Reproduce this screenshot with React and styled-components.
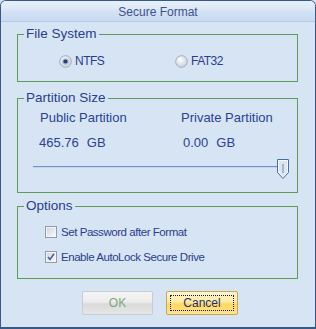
import styled, { createGlobalStyle } from "styled-components";

const Global = createGlobalStyle`
  html, body { margin: 0; padding: 0; background: #d6e4f3; }
  body { font-family: "Liberation Sans", Arial, sans-serif; }
`;

const Window = styled.div`
  box-sizing: border-box;
  width: 316px;
  height: 329px;
  background: #d6e4f3;
  border: 1px solid #35598b;
  border-bottom-width: 2px;
  border-radius: 6px 6px 0 0;
  overflow: hidden;
  display: flex;
  flex-direction: column;
`;

const TitleBar = styled.div`
  height: 19px;
  display: flex;
  align-items: center;
  justify-content: center;
  background: linear-gradient(#e6eff9 0%, #dfe9f7 35%, #d2e1f4 55%, #c9dbf1 100%);
  border-bottom: 1px solid #b2cbea;
  color: #3f5189;
  font-size: 12px;
  padding-top: 1px;
`;

const Group = styled.fieldset`
  margin: ${({ $top }) => $top}px 17px 0 16px;
  padding: 0;
  border: 1px solid #5e9c5c;
  min-width: 0;
`;

const Legend = styled.legend`
  margin-left: 6px;
  padding: 0 2px;
  font-size: 13.5px;
  line-height: 16px;
  color: #2a3c8e;
`;

const GroupBody = styled.div`
  height: ${({ $h }) => $h}px;
  box-sizing: border-box;
  padding: ${({ $pad }) => $pad};
`;

const RadioRow = styled.div`
  display: grid;
  grid-template-columns: 116px auto;
  height: 14px;
  align-items: center;
`;

const Option = styled.label`
  display: flex;
  align-items: center;
  gap: 3px;
  font-size: 12px;
  letter-spacing: -0.5px;
  color: #2a3c8e;
`;

const SizeGrid = styled.div`
  display: grid;
  grid-template-columns: 141px auto;
  row-gap: 9px;
  padding-left: 22px;
  font-size: 13px;
  line-height: 16px;
  color: #2c4196;
`;

const Value = styled.div`
  display: flex;
  gap: 8px;
  margin-left: ${({ $shift }) => $shift}px;
`;

const SliderRow = styled.div`
  display: flex;
  align-items: flex-start;
  margin: 8px 0 0 15px;
  width: 256px;
`;

const Track = styled.div`
  flex: 1;
  height: 1px;
  margin-top: 7px;
  background: #6f92cb;
  border-bottom: 1px solid #c3d5ee;
`;

const CheckList = styled.div`
  display: flex;
  flex-direction: column;
  gap: 9px;
  padding-left: 27px;
`;

const CheckItem = styled.label`
  display: flex;
  align-items: center;
  gap: 4px;
  height: 16px;
  font-size: 11.5px;
  letter-spacing: -0.45px;
  color: #2a3c8e;
`;

const Buttons = styled.div`
  display: flex;
  justify-content: center;
  gap: 13px;
  margin-top: 12px;
  padding-left: 4px;
`;

const Button = styled.button`
  width: ${({ $w }) => $w}px;
  height: 24px;
  box-sizing: border-box;
  border-radius: 2px;
  font-family: "Liberation Sans", Arial, sans-serif;
  font-size: 12px;
  padding: 0;
  position: relative;
  border: 1px solid ${({ $primary }) => ($primary ? "#c4a85a" : "#c9ccd0")};
  color: ${({ $primary }) => ($primary ? "#1e2f7a" : "#78a878")};
  background: ${({ $primary }) =>
    $primary
      ? "linear-gradient(#fff6cf 0%, #ffeaa0 45%, #ffd860 55%, #ffe48a 100%)"
      : "linear-gradient(#f5f5f5 0%, #ececec 45%, #dadada 55%, #e6e6e6 100%)"};
`;

const Focus = styled.span`
  position: absolute;
  inset: 3px;
  border: 1px dotted #1a1a40;
`;

const Radio = ({ checked }) => (
  <svg width="13" height="13" viewBox="0 0 13 13">
    <defs>
      <radialGradient id={checked ? "rg1" : "rg0"} cx="40%" cy="35%" r="70%">
        <stop offset="0" stopColor="#ffffff" />
        <stop offset="1" stopColor="#c7ced8" />
      </radialGradient>
    </defs>
    <circle cx="6.5" cy="6.5" r="5.8" fill={`url(#${checked ? "rg1" : "rg0"})`} stroke="#a3abb8" strokeWidth="1" />
    {checked && (
      <>
        <circle cx="6.5" cy="6.5" r="3.3" fill="#aebcd6" />
        <circle cx="6.5" cy="6.5" r="2.1" fill="#28406f" />
      </>
    )}
  </svg>
);

const Check = ({ checked }) => (
  <svg width="12" height="12" viewBox="0 0 12 12">
    <defs>
      <linearGradient id="cb" x1="0" y1="0" x2="1" y2="1">
        <stop offset="0" stopColor="#d3d6dc" />
        <stop offset="1" stopColor="#f7f7f8" />
      </linearGradient>
    </defs>
    <rect x="0.5" y="0.5" width="11" height="11" fill="#f4f5f7" stroke="#8e9bb2" />
    <rect x="2" y="2" width="8" height="8" fill="url(#cb)" />
    {checked && (
      <path d="M3 6 L5 8.5 L9 2.8" fill="none" stroke="#4d6294" strokeWidth="1.6" />
    )}
  </svg>
);

const Thumb = () => (
  <svg width="12" height="20" viewBox="0 0 12 20">
    <path d="M0.5 0.5 H11.5 V13.5 L6 19.5 L0.5 13.5 Z" fill="#dbe6f4" stroke="#4a6ba6" />
    <path d="M1.5 1.5 H10.5 V13 L6 18 L1.5 13 Z" fill="none" stroke="#f4f8fd" />
    <line x1="6" y1="5" x2="6" y2="14" stroke="#6a86b8" />
  </svg>
);

export default function App() {
  return (
    <>
      <Global />
      <Window>
        <TitleBar>Secure Format</TitleBar>

        <Group $top={4}>
          <Legend>File System</Legend>
          <GroupBody $h={39} $pad="12px 0 0 41px">
            <RadioRow>
              <Option><Radio checked />NTFS</Option>
              <Option><Radio />FAT32</Option>
            </RadioRow>
          </GroupBody>
        </Group>

        <Group $top={8}>
          <Legend>Partition Size</Legend>
          <GroupBody $h={86} $pad="4px 0 0 0">
            <SizeGrid>
              <div>Public Partition</div>
              <div>Private Partition</div>
              <Value $shift={-1}><span>465.76</span><span>GB</span></Value>
              <Value $shift={2}><span>0.00</span><span>GB</span></Value>
            </SizeGrid>
            <SliderRow>
              <Track />
              <Thumb />
            </SliderRow>
          </GroupBody>
        </Group>

        <Group $top={5}>
          <Legend>Options</Legend>
          <GroupBody $h={64} $pad="10px 0 0 0">
            <CheckList>
              <CheckItem><Check />Set Password after Format</CheckItem>
              <CheckItem><Check checked />Enable AutoLock Secure Drive</CheckItem>
            </CheckList>
          </GroupBody>
        </Group>

        <Buttons>
          <Button $w={71} disabled>OK</Button>
          <Button $w={72} $primary><Focus />Cancel</Button>
        </Buttons>
      </Window>
    </>
  );
}
